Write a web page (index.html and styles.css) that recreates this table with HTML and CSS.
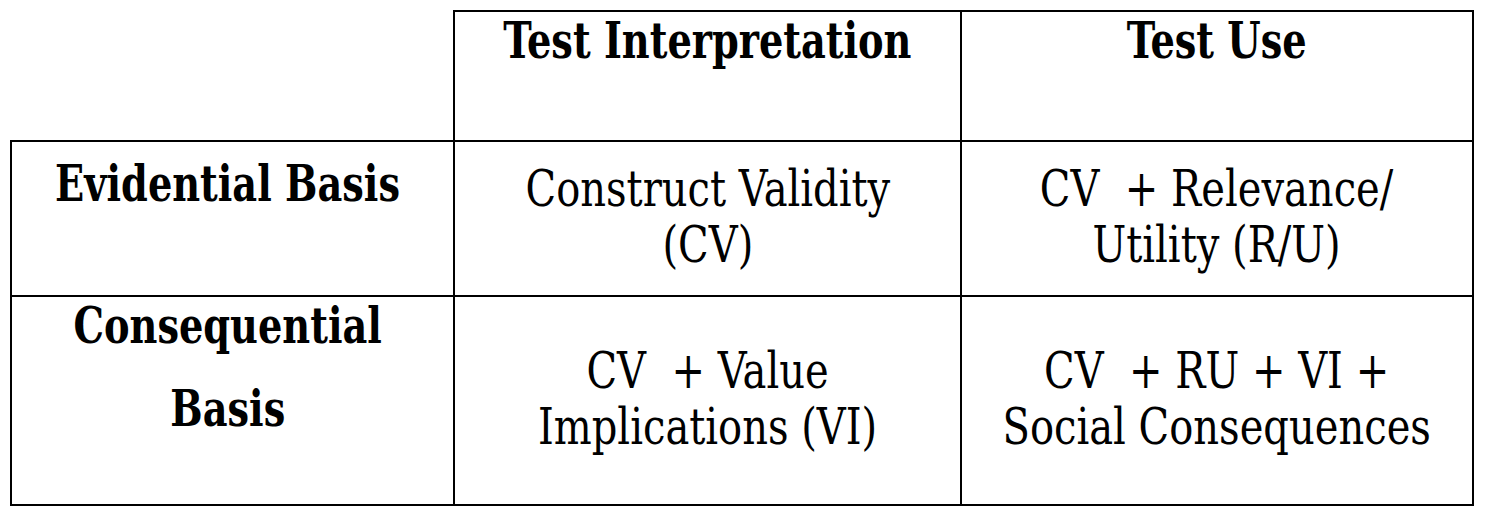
FILE: index.html
```html
<!DOCTYPE html>
<html lang="en">
<head>
<meta charset="utf-8">
<title>Validity Matrix</title>
<link rel="stylesheet" href="styles.css">
</head>
<body>
<div class="matrix">
  <div class="cell corner"></div>
  <div class="cell head top"><span class="txt">Test Interpretation</span></div>
  <div class="cell head top"><span class="txt">Test Use</span></div>

  <div class="cell side first-col row-ev"><span class="txt">Evidential Basis</span></div>
  <div class="cell body"><span class="txt">Construct Validity<br>(CV)</span></div>
  <div class="cell body"><span class="txt">CV &nbsp;+ Relevance/<br>Utility (R/U)</span></div>

  <div class="cell side first-col row-co">
    <span class="txt">Consequential</span>
    <span class="txt">Basis</span>
  </div>
  <div class="cell body"><span class="txt">CV &nbsp;+ Value<br>Implications (VI)</span></div>
  <div class="cell body"><span class="txt">CV &nbsp;+ RU + VI +<br>Social Consequences</span></div>
</div>
</body>
</html>
```

FILE: styles.css
```css
html, body {
  margin: 0;
  padding: 0;
  background: #ffffff;
}

body {
  font-family: "DejaVu Serif Condensed", "DejaVu Serif", serif;
  font-stretch: condensed;
  color: #000000;
}

.matrix {
  display: grid;
  grid-template-columns: 445px 507px 512px;
  grid-template-rows: 132px 155px 209px;
  margin: 10px 0 0 10px;
}

.cell {
  box-sizing: border-box;
  border-right: 2px solid #000;
  border-bottom: 2px solid #000;
  text-align: center;
}

.cell.top {
  border-top: 2px solid #000;
}

.cell.first-col {
  border-left: 2px solid #000;
}

.txt {
  display: inline-block;
  white-space: nowrap;
}

.head,
.side {
  font-size: 51px;
  font-weight: bold;
  line-height: 56px;
}

.head .txt,
.side .txt {
  transform: scaleX(0.835);
}

.side {
  padding-right: 10px;
}

.row-ev {
  padding-top: 13px;
}

.row-co {
  display: flex;
  flex-direction: column;
  align-items: center;
  gap: 27px;
}

.body {
  display: flex;
  align-items: center;
  justify-content: center;
  font-size: 50px;
  line-height: 56px;
  padding-bottom: 4px;
}

.body .txt {
  transform: scaleX(0.89);
}
```
